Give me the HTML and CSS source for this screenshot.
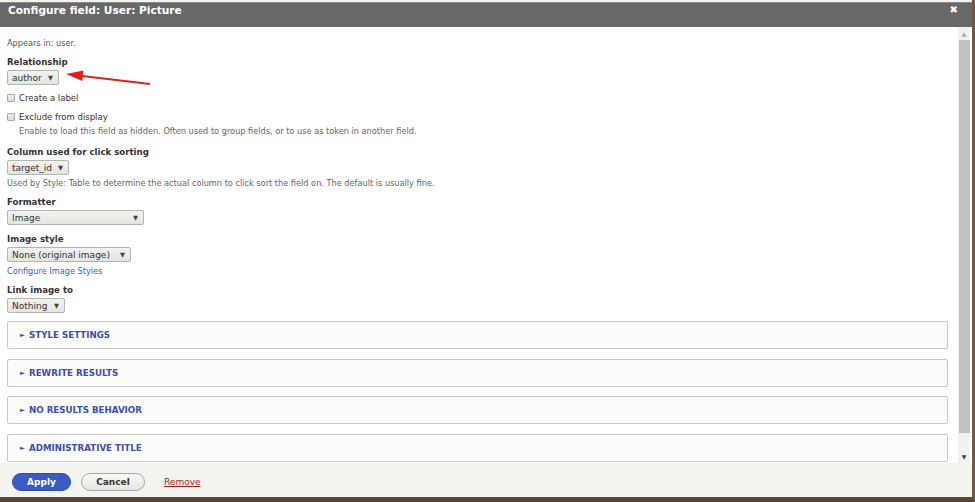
FILE: index.html
```html
<!DOCTYPE html>
<html lang="en">
<head>
  <meta charset="UTF-8" />
  <title>Configure field: User: Picture</title>
  <link rel="stylesheet" href="styles.css">
</head>
<body>
  <div class="dialog">
    <div class="titlebar">
      <span class="title">Configure field: User: Picture</span>
      <span class="close">&#10006;</span>
    </div>

    <div class="main">
      <div class="pane">
        <p class="appears">Appears in: user.</p>

        <div class="item">
          <label class="lbl">Relationship</label>
          <span class="select w-author">author <i>&#9660;</i></span>
        </div>

        <div class="check"><span class="box"></span>Create a label</div>

        <div class="check"><span class="box"></span>Exclude from display</div>
        <p class="desc indent">Enable to load this field as hidden. Often used to group fields, or to use as token in another field.</p>

        <div class="item">
          <label class="lbl">Column used for click sorting</label>
          <span class="select w-target">target_id <i>&#9660;</i></span>
          <p class="desc">Used by Style: Table to determine the actual column to click sort the field on. The default is usually fine.</p>
        </div>

        <div class="item">
          <label class="lbl">Formatter</label>
          <span class="select w-image">Image <i>&#9660;</i></span>
        </div>

        <div class="item">
          <label class="lbl">Image style</label>
          <span class="select w-style">None (original image) <i>&#9660;</i></span>
          <a class="link" href="#">Configure Image Styles</a>
        </div>

        <div class="item">
          <label class="lbl">Link image to</label>
          <span class="select w-link">Nothing <i>&#9660;</i></span>
        </div>

        <div class="fieldset"><span class="tri">&#9658;</span>STYLE SETTINGS</div>
        <div class="fieldset"><span class="tri">&#9658;</span>REWRITE RESULTS</div>
        <div class="fieldset"><span class="tri">&#9658;</span>NO RESULTS BEHAVIOR</div>
        <div class="fieldset"><span class="tri">&#9658;</span>ADMINISTRATIVE TITLE</div>

        <!-- annotation arrow pointing at the relationship select -->
        <svg class="arrow" width="100" height="24" viewBox="0 0 100 24">
          <line x1="90" y1="18" x2="20" y2="9.7" stroke="#e4201c" stroke-width="2" />
          <polygon points="6,8 23.5,4.5 22.3,15" fill="#e4201c" />
        </svg>
      </div>

      <div class="scrollbar">
        <span class="arr up">&#9650;</span>
        <span class="thumb"></span>
        <span class="arr down">&#9660;</span>
      </div>
    </div>

    <div class="footer">
      <button class="btn apply">Apply</button>
      <button class="btn cancel">Cancel</button>
      <a class="remove" href="#">Remove</a>
    </div>
  </div>
</body>
</html>
```

FILE: styles.css
```css
body {
  margin: 0;
  padding: 0;
  font-family: "DejaVu Sans", sans-serif;
  background: #fff;
  color: #333;
}

.dialog {
  width: 972px;
  height: 497px;
  border-right: 3px solid #6e5a4c;
  border-bottom: 5px solid #5d4636;
  display: flex;
  flex-direction: column;
  background: #f3f3ef;
}

.titlebar {
  margin-top: 2px;
  height: 24px;
  background: #686868;
  border-top: 1px solid #8a8a8a;
  display: flex;
  align-items: flex-start;
  justify-content: space-between;
  padding: 0 14px 0 8px;
  color: #fff;
}

.title {
  font-weight: bold;
  font-size: 10.6px;
  line-height: 14px;
}

.close {
  font-size: 10px;
  line-height: 14px;
  font-weight: bold;
}

.main {
  display: flex;
  height: 436px;
  background: #fff;
}

.pane {
  flex: 1;
  position: relative;
  overflow: hidden;
  padding: 11px 10px 0 7px;
  font-size: 8px;
  line-height: 10px;
}

p {
  margin: 0;
}

.appears {
  font-size: 8.2px;
  line-height: 10px;
  color: #555;
  margin-bottom: 8px;
}

.item {
  margin-bottom: 8px;
}

.lbl {
  display: block;
  font-weight: bold;
  font-size: 8.6px;
  line-height: 12px;
  color: #333;
  margin-bottom: 2px;
}

.select {
  display: flex;
  justify-content: space-between;
  align-items: center;
  box-sizing: border-box;
  height: 15px;
  padding: 0 5px 0 4px;
  border: 1px solid #b4b4b0;
  border-radius: 2px;
  background: linear-gradient(#f2f2ef, #e4e4e0);
  font-size: 9px;
  color: #333;
}

.select i {
  font-style: normal;
  font-size: 6.5px;
  color: #444;
}

.w-author { width: 52px; }
.w-target { width: 62px; }
.w-image { width: 137px; }
.w-style { width: 124px; }
.w-link { width: 58px; }

.check {
  display: flex;
  align-items: center;
  height: 10px;
  font-size: 8.5px;
  color: #333;
  margin-bottom: 9px;
}

.check .box {
  width: 6px;
  height: 6px;
  border: 1px solid #a8a8a8;
  border-radius: 1px;
  background: linear-gradient(#f0f0f0, #d8d8d8);
  margin-right: 4px;
}

.desc {
  font-size: 8.2px;
  line-height: 10px;
  color: #666;
  margin-top: 3px;
}

.desc.indent {
  margin: -5px 0 10px 12px;
}

.link {
  display: block;
  font-size: 8.2px;
  line-height: 10px;
  color: #3c5fb3;
  text-decoration: none;
  margin-top: 4px;
}

.fieldset {
  height: 28px;
  box-sizing: border-box;
  border: 1px solid #c8c8c4;
  border-radius: 2px;
  background: #fcfcfa;
  margin-bottom: 9.5px;
  padding-left: 12px;
  display: flex;
  align-items: center;
  font-size: 8.7px;
  font-weight: bold;
  color: #3b4fae;
}

.fieldset .tri {
  font-size: 6.5px;
  margin-right: 4px;
}

.arrow {
  position: absolute;
  left: 60px;
  top: 39px;
}

.scrollbar {
  width: 12px;
  margin-right: 2px;
  background: #f1f1f0;
  display: flex;
  flex-direction: column;
  align-items: center;
}

.scrollbar .arr {
  font-size: 6px;
  line-height: 13px;
  height: 13px;
}

.scrollbar .up {
  color: #a8a8a8;
}

.scrollbar .down {
  color: #404040;
  margin-top: auto;
}

.scrollbar .thumb {
  width: 11px;
  height: 393px;
  background: #c1c1c1;
}

.footer {
  flex: 1;
  display: flex;
  align-items: center;
  padding: 3px 12px 0;
  gap: 10px;
}

.btn {
  font-family: "DejaVu Sans", sans-serif;
  font-weight: bold;
  font-size: 9px;
  height: 18px;
  border-radius: 9px;
  padding: 0;
  cursor: pointer;
}

.apply {
  width: 59px;
  background: #3a5bc2;
  border: 1px solid #2f4da8;
  color: #fff;
}

.cancel {
  width: 64px;
  background: linear-gradient(#f8f8f6, #e6e6e2);
  border: 1px solid #a8a8a4;
  color: #333;
}

.remove {
  margin-left: 9px;
  font-size: 9px;
  color: #b3201c;
}
```
